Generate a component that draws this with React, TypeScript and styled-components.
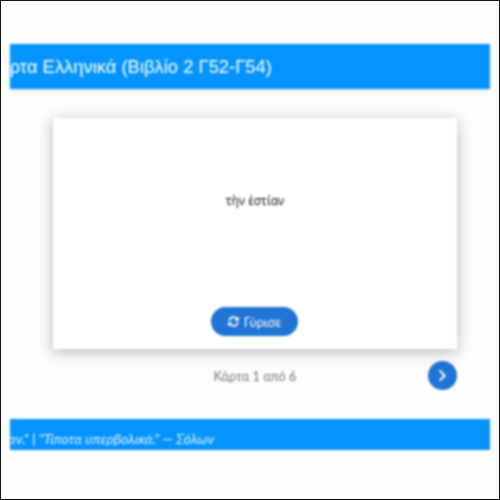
import React from 'react';
import styled, { createGlobalStyle } from 'styled-components';
import { FaSyncAlt, FaChevronRight } from 'react-icons/fa';

const GlobalStyle = createGlobalStyle`
    html, body {
        margin: 0;
        padding: 0;
        background: #fff;
    }
`;

const Frame = styled.div`
    box-sizing: border-box;
    width: 500px;
    height: 500px;
    border: 1px solid #111;
    background: #fdfdfd;
    overflow: hidden;
`;

const Page = styled.div`
    height: 100%;
    padding: 43px 9px 0 9px;
    display: flex;
    flex-direction: column;
    filter: blur(0.9px);
`;

const Banner = styled.div`
    height: 45px;
    display: flex;
    align-items: center;
    overflow: hidden;
    white-space: nowrap;
    background: #0594ff;
    color: #fff;
    font-family: 'Liberation Sans', Arial, sans-serif;
    font-size: 18.4px;
    box-shadow: 0 2px 6px rgba(0, 0, 0, 0.08);
`;

const BannerText = styled.span`
    margin-left: -23px;
`;

const Main = styled.div`
    padding: 29px 33px 0 43px;
    display: flex;
    flex-direction: column;
`;

const Card = styled.div`
    height: 231px;
    background: #fff;
    box-shadow: 0 3px 14px rgba(0, 0, 0, 0.28);
    display: flex;
    flex-direction: column;
    align-items: center;
`;

const Word = styled.div`
    margin-top: 75px;
    font-family: 'Noto Sans', 'DejaVu Sans', sans-serif;
    font-size: 12px;
    line-height: 16px;
    color: #111;
`;

const FlipButton = styled.button`
    margin-top: 98px;
    width: 87px;
    height: 29px;
    margin-left: -1px;
    border: 0;
    border-radius: 15px;
    background: #1f74d4;
    color: #fff;
    display: flex;
    align-items: center;
    justify-content: center;
    gap: 5px;
    font-family: Lato, sans-serif;
    font-size: 13px;
`;

const Pager = styled.div`
    margin-top: 12px;
    height: 29px;
    display: flex;
    align-items: center;
    justify-content: flex-end;
    position: relative;
`;

const Counter = styled.div`
    position: absolute;
    left: 0;
    right: 0;
    text-align: center;
    font-family: Lato, sans-serif;
    font-size: 12.8px;
    color: #777;
`;

const NextButton = styled.button`
    width: 29px;
    height: 29px;
    padding: 0;
    border: 0;
    border-radius: 50%;
    background: #1f74d4;
    color: #fff;
    display: flex;
    align-items: center;
    justify-content: center;
    font-size: 13px;
`;

const Footer = styled(Banner)`
    height: 31px;
    margin-top: 29px;
    align-items: flex-end;
    font-family: Lato, sans-serif;
    font-size: 14px;
    font-style: italic;
    font-weight: 400;
    color: #e2f2ff;
    box-shadow: none;
`;

const FooterText = styled.span`
    margin-left: -2px;
    padding-bottom: 3px;
`;

const App = () => (
    <Frame>
        <GlobalStyle />
        <Page>
            <Banner>
                <BannerText>Κάρτα Ελληνικά (Βιβλίο 2 Γ52-Γ54)</BannerText>
            </Banner>
            <Main>
                <Card>
                    <Word>τὴν ἑστίαν</Word>
                    <FlipButton>
                        <FaSyncAlt size={11} />
                        Γύρισε
                    </FlipButton>
                </Card>
                <Pager>
                    <Counter>Κάρτα 1 από 6</Counter>
                    <NextButton aria-label="Επόμενη">
                        <FaChevronRight />
                    </NextButton>
                </Pager>
            </Main>
            <Footer>
                <FooterText>αν." | "Τίποτα υπερβολικά." — Σόλων</FooterText>
            </Footer>
        </Page>
    </Frame>
);

export default App;
